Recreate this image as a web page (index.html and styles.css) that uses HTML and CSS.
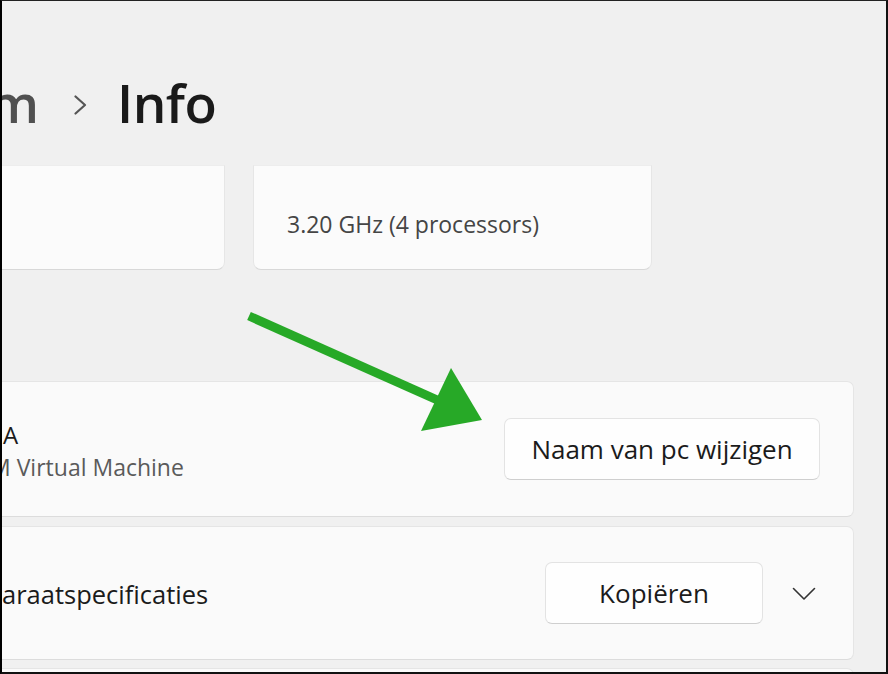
FILE: index.html
```html
<!DOCTYPE html>
<html lang="nl">
<head>
<meta charset="utf-8">
<title>Info</title>
<link rel="stylesheet" href="styles.css">
</head>
<body>
<div class="frame">
  <div class="content">
    <div class="title-row">
      <span class="crumb-parent">m</span>
      <svg class="crumb-chev" width="13" height="20" viewBox="0 0 13 20"><path d="M1.5 1.5 L11 10 L1.5 18.5" fill="none" stroke="#555" stroke-width="2.2" stroke-linecap="round" stroke-linejoin="round"/></svg>
      <span class="crumb-current">Info</span>
    </div>

    <div class="spec-row">
      <div class="spec-card"></div>
      <div class="spec-card"><span class="spec-text">3.20 GHz (4 processors)</span></div>
    </div>

    <div class="card card-name">
      <div class="name-text">
        <div class="name-main">A</div>
        <div class="name-sub">M Virtual Machine</div>
      </div>
      <button class="btn btn-rename">Naam van pc wijzigen</button>
    </div>

    <div class="card card-specs">
      <div class="specs-title">araatspecificaties</div>
      <button class="btn btn-copy">Kopiëren</button>
      <svg class="expand-chev" width="24" height="14" viewBox="0 0 24 14"><path d="M1.5 1.5 L12 12 L22.5 1.5" fill="none" stroke="#333" stroke-width="1.6" stroke-linecap="round" stroke-linejoin="round"/></svg>
    </div>

    <div class="card card-next"></div>
  </div>

  <svg class="annot-arrow" width="888" height="674" viewBox="0 0 888 674">
    <line x1="249" y1="316" x2="444" y2="403" stroke="#27a927" stroke-width="9"/>
    <polygon points="451,368 482,420 421,431" fill="#27a927"/>
  </svg>
</div>
</body>
</html>
```

FILE: styles.css
```css
html, body {
  margin: 0;
  padding: 0;
  background: #000;
}

.frame {
  position: relative;
  width: 888px;
  height: 674px;
  box-sizing: border-box;
  border-top: 1px solid #222;
  border-left: 2px solid #000;
  border-right: 2px solid #111;
  border-bottom: 2px solid #111;
  background: #f0f0f0;
  overflow: hidden;
  font-family: "Open Sans", "Noto Sans", sans-serif;
  color: #1b1b1b;
}

.content {
  margin-left: -62px;
  width: 914px;
  padding-top: 75px;
}

.title-row {
  display: flex;
  align-items: center;
  height: 53px;
  line-height: 53px;
  font-size: 53px;
  font-weight: 600;
}

.crumb-parent {
  width: 99px;
  text-align: right;
  color: #505050;
}

.crumb-chev {
  margin-left: 35px;
  margin-top: 4px;
}

.crumb-current {
  margin-left: 30px;
  color: #1a1a1a;
  letter-spacing: -0.5px;
}

.spec-row {
  display: flex;
  gap: 28px;
  margin-top: 36px;
  margin-left: -114px;
}

.spec-card {
  width: 397px;
  height: 103px;
  box-sizing: content-box;
  background: #fbfbfb;
  border: 1px solid #e6e6e6;
  border-top-color: #ededed;
  border-bottom-color: #d8d8d8;
  border-radius: 0 0 8px 8px;
  padding: 0;
}

.spec-text {
  display: block;
  padding: 42px 0 0 33px;
  font-size: 23px;
  line-height: 32px;
  color: #454545;
}

.card {
  box-sizing: border-box;
  background: #fafafa;
  border: 1px solid #e5e5e5;
  border-bottom-color: #dcdcdc;
  border-radius: 7px;
  display: flex;
  align-items: center;
}

.card-name {
  margin-top: 111px;
  height: 136px;
  padding: 0 33px 0 62px;
}

.name-text {
  flex: 1;
  margin-top: 4px;
}

.name-main {
  padding-left: 0;
  font-size: 24px;
  line-height: 32px;
  color: #1b1b1b;
}

.name-sub {
  margin-left: -13px;
  font-size: 23px;
  line-height: 32px;
  color: #5a5a5a;
}

.btn {
  box-sizing: border-box;
  height: 62px;
  background: #fefefe;
  border: 1px solid #e3e3e3;
  border-bottom-color: #cfcfcf;
  border-radius: 7px;
  font-family: "Open Sans", "Noto Sans", sans-serif;
  font-size: 26px;
  color: #1b1b1b;
  padding: 0;
}

.btn-rename {
  width: 316px;
}

.card-specs {
  margin-top: 9px;
  height: 134px;
  padding: 0 37px 0 61px;
}

.specs-title {
  flex: 1;
  font-size: 25.5px;
  line-height: 34px;
  color: #1b1b1b;
  margin-top: 2px;
}

.btn-copy {
  width: 218px;
}

.expand-chev {
  margin-left: 29px;
  margin-top: 2px;
}

.card-next {
  margin-top: 8px;
  height: 60px;
}

.annot-arrow {
  position: absolute;
  left: -2px;
  top: -1px;
  pointer-events: none;
}
```
